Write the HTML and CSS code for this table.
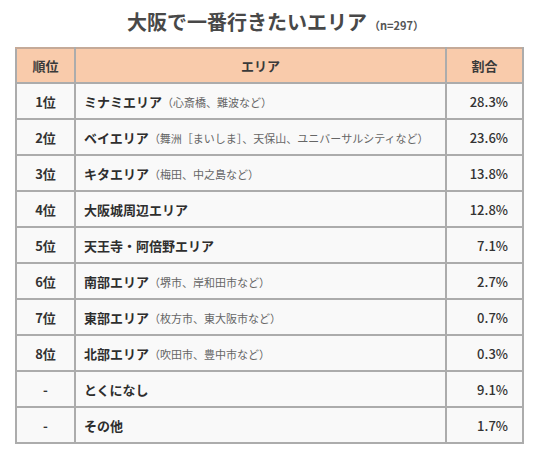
FILE: index.html
```html
<!DOCTYPE html>
<html lang="ja">
<head>
<meta charset="utf-8">
<link rel="stylesheet" href="styles.css">
</head>
<body>
<h1 class="title">大阪で一番行きたいエリア<span class="n">（n=297）</span></h1>
<table class="rank">
  <colgroup><col class="c1"><col class="c2"><col class="c3"></colgroup>
  <thead>
    <tr><th>順位</th><th>エリア</th><th>割合</th></tr>
  </thead>
  <tbody>
    <tr><td class="r">1位</td><td class="a"><b>ミナミエリア</b><span class="s">（心斎橋、難波など）</span></td><td class="p">28.3%</td></tr>
    <tr><td class="r">2位</td><td class="a"><b>ベイエリア</b><span class="s">（舞洲［まいしま］、天保山、ユニバーサルシティなど）</span></td><td class="p">23.6%</td></tr>
    <tr><td class="r">3位</td><td class="a"><b>キタエリア</b><span class="s">（梅田、中之島など）</span></td><td class="p">13.8%</td></tr>
    <tr><td class="r">4位</td><td class="a"><b>大阪城周辺エリア</b></td><td class="p">12.8%</td></tr>
    <tr><td class="r">5位</td><td class="a"><b>天王寺・阿倍野エリア</b></td><td class="p">7.1%</td></tr>
    <tr><td class="r">6位</td><td class="a"><b>南部エリア</b><span class="s">（堺市、岸和田市など）</span></td><td class="p">2.7%</td></tr>
    <tr><td class="r">7位</td><td class="a"><b>東部エリア</b><span class="s">（枚方市、東大阪市など）</span></td><td class="p">0.7%</td></tr>
    <tr><td class="r">8位</td><td class="a"><b>北部エリア</b><span class="s">（吹田市、豊中市など）</span></td><td class="p">0.3%</td></tr>
    <tr><td class="r">-</td><td class="a"><b>とくになし</b></td><td class="p">9.1%</td></tr>
    <tr><td class="r">-</td><td class="a"><b>その他</b></td><td class="p">1.7%</td></tr>
  </tbody>
</table>
</body>
</html>
```
FILE: styles.css
```css
html, body {
  margin: 0;
  padding: 0;
  background: #ffffff;
}
body {
  font-family: "Noto Sans CJK JP", "Noto Sans", sans-serif;
  color: #333333;
}
.title {
  margin: 0;
  height: 47px;
  padding-top: 9px;
  box-sizing: border-box;
  text-align: center;
  font-size: 20px;
  line-height: 26px;
  font-weight: 700;
  color: #484848;
  padding-left: 14px;
}
.title .n {
  font-size: 11px;
  font-weight: 700;
  color: #555;
  margin-left: 2px;
}
.rank {
  margin-left: 15px;
  width: 507px;
  border-collapse: collapse;
  table-layout: fixed;
  font-size: 13px;
}
.c1 { width: 59px; }
.c2 { width: 371px; }
.c3 { width: 77px; }
.rank th, .rank td {
  border: 2px solid #acacac;
  padding: 0;
}
.rank th {
  background: #f9cbab;
  height: 33px;
  font-weight: 700;
  color: #3a3a3a;
  text-align: center;
  border-top-color: #c5aa98;
}
.rank td {
  background: #f9f9f9;
  height: 34px;
}
.rank .r {
  text-align: center;
  font-weight: 700;
}
.rank .a {
  padding-left: 8px;
  text-align: left;
  white-space: nowrap;
}
.rank .a b {
  font-weight: 700;
  color: #2e2e2e;
}
.rank .s {
  font-size: 11px;
  color: #666666;
}
.rank .p {
  text-align: right;
  padding-right: 14px;
  font-weight: 500;
}
```
